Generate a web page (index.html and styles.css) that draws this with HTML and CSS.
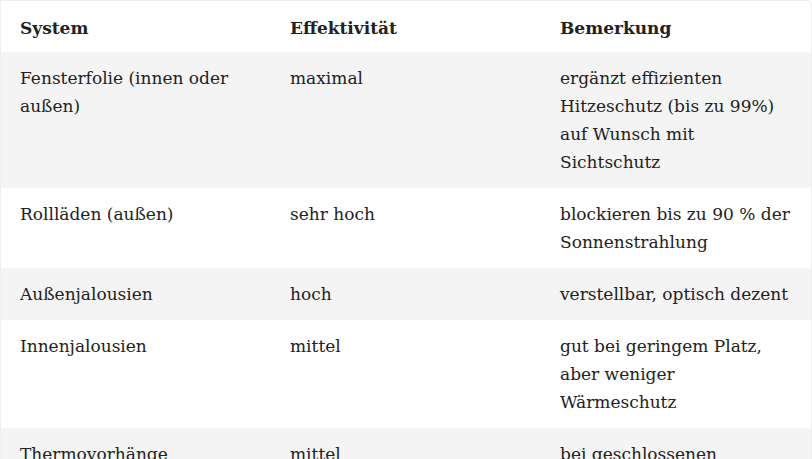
FILE: index.html
```html
<!DOCTYPE html>
<html lang="de">
<head>
<meta charset="utf-8">
<title>Sonnenschutz-Systeme</title>
<link rel="stylesheet" href="styles.css">
</head>
<body>
<div class="table-wrap">
  <table class="cmp">
    <colgroup><col class="c"><col class="c"><col class="c"></colgroup>
    <thead>
      <tr><th>System</th><th>Effektivität</th><th>Bemerkung</th></tr>
    </thead>
    <tbody>
      <tr><td>Fensterfolie (innen oder außen)</td><td>maximal</td><td>ergänzt effizienten Hitzeschutz (bis zu 99%) auf Wunsch mit Sichtschutz</td></tr>
      <tr><td>Rollläden (außen)</td><td>sehr hoch</td><td>blockieren bis zu 90 % der Sonnenstrahlung</td></tr>
      <tr><td>Außenjalousien</td><td>hoch</td><td>verstellbar, optisch dezent</td></tr>
      <tr><td>Innenjalousien</td><td>mittel</td><td>gut bei geringem Platz, aber weniger Wärmeschutz</td></tr>
      <tr><td>Thermovorhänge</td><td>mittel</td><td>bei geschlossenen Vorhängen wirksam</td></tr>
    </tbody>
  </table>
</div>
</body>
</html>
```
FILE: styles.css
```css
html, body { margin: 0; padding: 0; background: #fff; }
body { font-family: "DejaVu Serif", "Liberation Serif", serif; color: #222; }
.table-wrap {
  width: 810px;
  border: 1px solid #efefef;
  border-radius: 0 4px 0 0;
  overflow: hidden;
}
.cmp { width: 810px; border-collapse: collapse; table-layout: fixed; }
.cmp .c { width: 270px; }
.cmp th, .cmp td {
  padding: 12px 20px 12px 19px;
  text-align: left;
  vertical-align: top;
  font-size: 17px;
  line-height: 28px;
}
.cmp th { font-weight: bold; padding-top: 13px; padding-bottom: 10px; }
.cmp tbody tr:nth-child(odd) { background: #f4f4f4; }
```
